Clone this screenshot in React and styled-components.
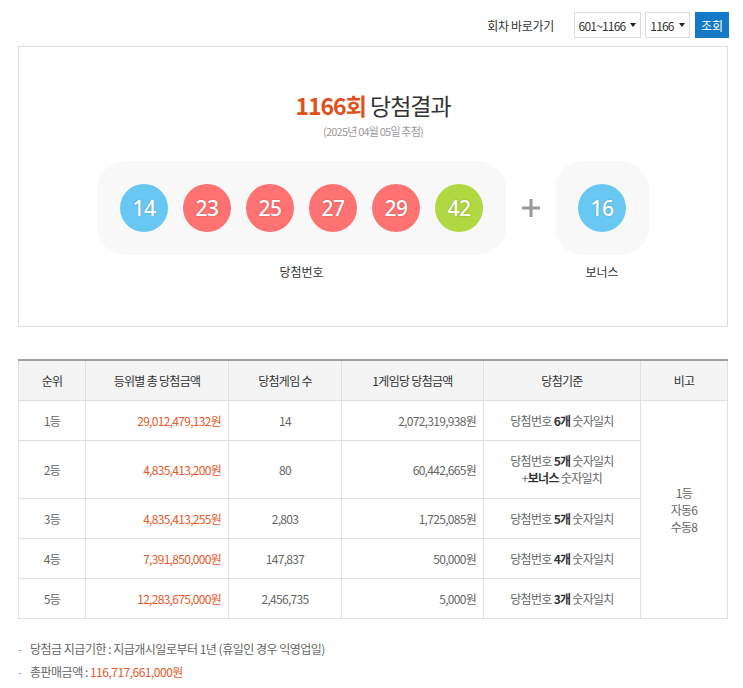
import React from "react";
import styled, { createGlobalStyle } from "styled-components";

const Global = createGlobalStyle`
  html, body { margin: 0; padding: 0; background: #fff; }
  body { font-family: "Noto Sans CJK KR", "Noto Sans", sans-serif; color: #666; }
  * { box-sizing: border-box; }
`;

const Page = styled.div`
  width: 743px;
  padding: 0 15px 0 18px;
`;

const TopBar = styled.div`
  display: flex;
  justify-content: flex-end;
  align-items: center;
  gap: 4px;
  padding-top: 12px;
  margin-right: -1px;
`;

const JumpLabel = styled.span`
  font-size: 12px;
  color: #333;
  letter-spacing: -0.3px;
  margin-right: 16px;
`;

const Select = styled.div`
  height: 26px;
  width: ${(p) => p.$w}px;
  border: 1px solid #ddd;
  display: flex;
  align-items: center;
  justify-content: center;
  gap: 5px;
  font-size: 12px;
  color: #333;
  letter-spacing: -0.8px;
  background: #fff;
`;

const Caret = styled.span`
  width: 0;
  height: 0;
  border-left: 3px solid transparent;
  border-right: 3px solid transparent;
  border-top: 4px solid #222;
`;

const Button = styled.button`
  height: 26px;
  width: 34px;
  border: 0;
  background: #1479c6;
  color: #fff;
  font-family: inherit;
  font-size: 12px;
  padding: 0;
  margin-left: 1px;
`;

const ResultBox = styled.section`
  margin-top: 8px;
  border: 1px solid #ddd;
  padding: 43px 0 45px;
  display: flex;
  flex-direction: column;
  align-items: center;
`;

const Title = styled.h2`
  margin: 0;
  font-size: 23px;
  line-height: 30px;
  font-weight: 400;
  color: #333;
  letter-spacing: -1px;
`;

const Round = styled.strong`
  color: #e1501c;
  font-weight: 700;
`;

const DrawDate = styled.p`
  margin: 3px 0 0;
  font-size: 11px;
  line-height: 16px;
  color: #999;
  letter-spacing: -0.8px;
`;

const NumbersRow = styled.div`
  margin-top: 22px;
  display: flex;
  align-items: flex-start;
`;

const Group = styled.div`
  display: flex;
  flex-direction: column;
  align-items: center;
`;

const Panel = styled.div`
  height: 94px;
  padding: 0 23px;
  background: #f8f8f8;
  border-radius: 28px;
  display: flex;
  align-items: center;
  gap: 15px;
`;

const Ball = styled.span`
  width: 48px;
  height: 48px;
  border-radius: 50%;
  background: ${(p) => p.$color};
  color: #fff;
  display: flex;
  align-items: center;
  justify-content: center;
  font-family: "Noto Sans", sans-serif;
  font-size: 21px;
  font-weight: 500;
  letter-spacing: -0.5px;
  text-shadow: 0 0 2px rgba(0, 0, 0, 0.25);
`;

const Plus = styled.div`
  width: 49px;
  height: 94px;
  display: flex;
  align-items: center;
  justify-content: center;
`;

const GroupLabel = styled.div`
  margin-top: 8px;
  font-size: 12px;
  line-height: 18px;
  color: #333;
`;

const Table = styled.table`
  margin-top: 32px;
  width: 100%;
  border-collapse: collapse;
  table-layout: fixed;
  border-top: 2px solid #a0a0a0;
  font-size: 12px;
  letter-spacing: -0.7px;
`;

const Th = styled.th`
  height: 40px;
  background: #f4f4f4;
  border: 1px solid #e0e0e0;
  border-top: 0;
  font-weight: 400;
  color: #333;
  padding: 0;
`;

const Td = styled.td`
  height: ${(p) => (p.$tall ? 58 : 40)}px;
  border: 1px solid #e0e0e0;
  color: ${(p) => (p.$accent ? "#e5592b" : "#666")};
  text-align: ${(p) => (p.$right ? "right" : "center")};
  padding: ${(p) => (p.$right ? "0 7px 0 0" : "0")};
  line-height: 17px;
`;

const Bold = styled.b`
  color: #333;
  font-weight: 700;
`;

const Notes = styled.ul`
  list-style: none;
  margin: 18px 0 0;
  padding: 0;
  font-size: 12px;
  letter-spacing: -0.5px;
`;

const Note = styled.li`
  line-height: 23px;
  color: #666;
  &::before {
    content: "-";
    color: #aaa;
    display: inline-block;
    width: 12px;
  }
`;

const Accent = styled.span`
  color: #e5592b;
`;

const BLUE = "#69c8f2";
const RED = "#ff7272";
const GREEN = "#b0d840";

const balls = [
  [14, BLUE],
  [23, RED],
  [25, RED],
  [27, RED],
  [29, RED],
  [42, GREEN],
];

const rows = [
  ["1등", "29,012,479,132원", "14", "2,072,319,938원", <>당첨번호 <Bold>6개</Bold> 숫자일치</>],
  ["2등", "4,835,413,200원", "80", "60,442,665원", <>당첨번호 <Bold>5개</Bold> 숫자일치<br />+<Bold>보너스</Bold> 숫자일치</>, true],
  ["3등", "4,835,413,255원", "2,803", "1,725,085원", <>당첨번호 <Bold>5개</Bold> 숫자일치</>],
  ["4등", "7,391,850,000원", "147,837", "50,000원", <>당첨번호 <Bold>4개</Bold> 숫자일치</>],
  ["5등", "12,283,675,000원", "2,456,735", "5,000원", <>당첨번호 <Bold>3개</Bold> 숫자일치</>],
];

export default function App() {
  return (
    <Page>
      <Global />
      <TopBar>
        <JumpLabel>회차 바로가기</JumpLabel>
        <Select $w={67}>601~1166 <Caret /></Select>
        <Select $w={45}>1166 <Caret /></Select>
        <Button>조회</Button>
      </TopBar>

      <ResultBox>
        <Title>
          <Round>1166회</Round> 당첨결과
        </Title>
        <DrawDate>(2025년 04월 05일 추첨)</DrawDate>
        <NumbersRow>
          <Group>
            <Panel>
              {balls.map(([n, c]) => (
                <Ball key={n} $color={c}>{n}</Ball>
              ))}
            </Panel>
            <GroupLabel>당첨번호</GroupLabel>
          </Group>
          <Plus>
            <svg width="18" height="18" viewBox="0 0 18 18">
              <path d="M7.5 0h3v7.5H18v3h-7.5V18h-3v-7.5H0v-3h7.5z" fill="#999" />
            </svg>
          </Plus>
          <Group>
            <Panel>
              <Ball $color={BLUE}>16</Ball>
            </Panel>
            <GroupLabel>보너스</GroupLabel>
          </Group>
        </NumbersRow>
      </ResultBox>

      <Table>
        <colgroup>
          <col style={{ width: 67 }} />
          <col style={{ width: 143 }} />
          <col style={{ width: 113 }} />
          <col style={{ width: 142 }} />
          <col style={{ width: 157 }} />
          <col style={{ width: 87 }} />
        </colgroup>
        <thead>
          <tr>
            <Th>순위</Th>
            <Th>등위별 총 당첨금액</Th>
            <Th>당첨게임 수</Th>
            <Th>1게임당 당첨금액</Th>
            <Th>당첨기준</Th>
            <Th>비고</Th>
          </tr>
        </thead>
        <tbody>
          {rows.map(([rank, total, count, each, rule, tall], i) => (
            <tr key={rank}>
              <Td $tall={tall}>{rank}</Td>
              <Td $right $accent>{total}</Td>
              <Td>{count}</Td>
              <Td $right>{each}</Td>
              <Td>{rule}</Td>
              {i === 0 && (
                <Td rowSpan={5}>
                  1등<br />자동6<br />수동8
                </Td>
              )}
            </tr>
          ))}
        </tbody>
      </Table>

      <Notes>
        <Note>당첨금 지급기한 : 지급개시일로부터 1년 (휴일인 경우 익영업일)</Note>
        <Note>총판매금액 : <Accent>116,717,661,000원</Accent></Note>
      </Notes>
    </Page>
  );
}
